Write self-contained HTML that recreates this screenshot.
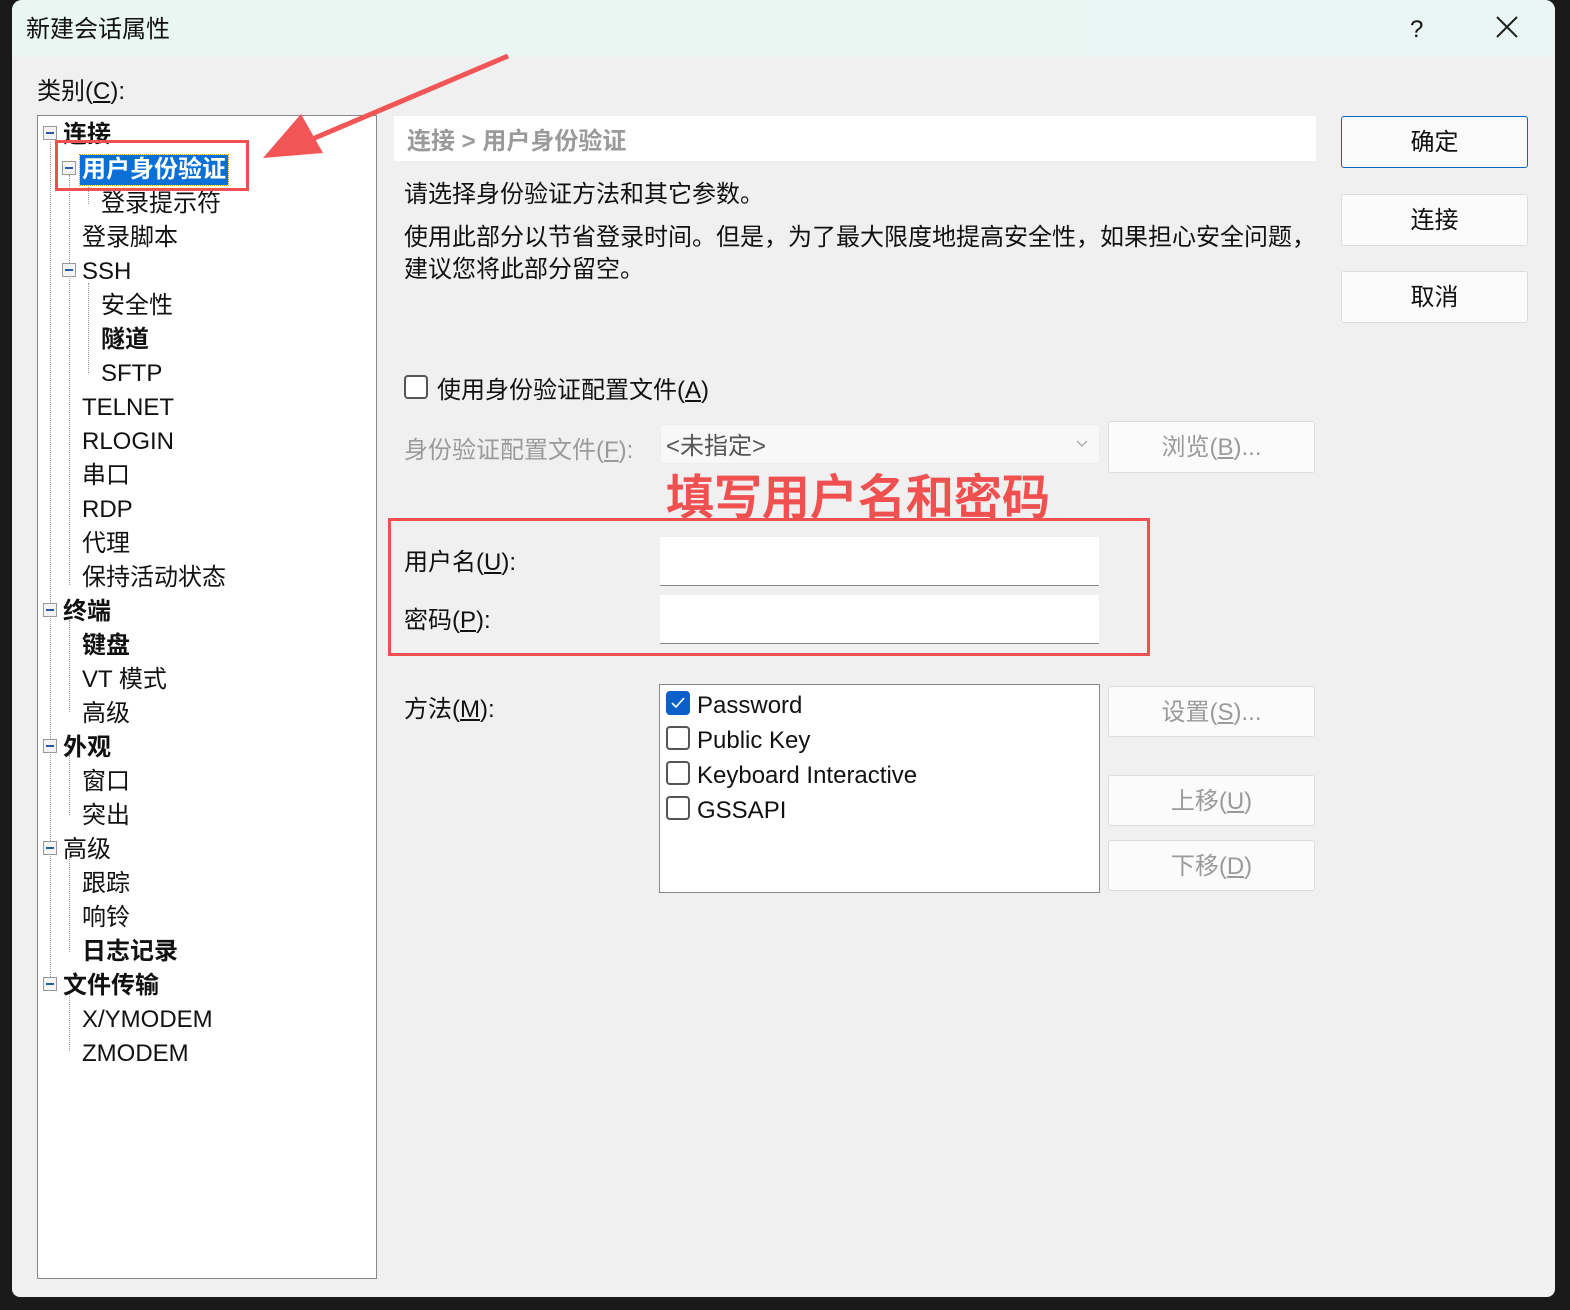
<!DOCTYPE html><html><head><meta charset="utf-8"><style>
body{margin:0;width:1570px;height:1310px;background:#1a1a1a;position:relative;overflow:hidden;font-family:"Liberation Sans","Noto Sans CJK SC",sans-serif;color:#111}
.a{position:absolute}
.dlg{left:12px;top:0;width:1543px;height:1297px;background:#f0f0f0;border-radius:10px 10px 8px 8px;overflow:hidden}
.title{left:0;top:0;width:1543px;height:57px;background:linear-gradient(90deg,#e9f6f2,#eaf6f3)}
.t{font-size:24px;white-space:nowrap;line-height:30px;margin-top:2px}
.tree{left:37px;top:115px;width:338px;height:1162px;background:#fff;border:1px solid #888}
.pm{width:14px;height:14px;border:1px solid #999;background:#f4f4f4;box-sizing:border-box}
.pm:after{content:"";position:absolute;left:2px;top:5px;width:8px;height:2px;background:#2a5aa8}
.btn{background:#fbfbfb;border:1px solid #ddd;border-radius:3px;font-size:24px;text-align:center;box-sizing:border-box}
.gray{color:#9a9a9a}
.inp{background:#fff;border-bottom:1px solid #888;box-sizing:border-box}
.cb{width:24px;height:24px;border:2px solid #555;border-radius:4px;box-sizing:border-box;background:#fff}
.dot{border-left:1px dotted #999}
</style></head><body>
<div class="a dlg">
<div class="a title"></div>
<div class="a t" style="left:14px;top:13px">新建会话属性</div>
<div class="a t" style="left:1398px;top:13px">?</div>
<svg class="a" style="left:1484px;top:16px" width="22" height="22"><path d="M1 1L21 21M21 1L1 21" stroke="#222" stroke-width="2"/></svg>
<div class="a t" style="left:25px;top:75px">类别(<u>C</u>):</div>
</div>
<div class="a tree"></div>
<div class="a dot" style="left:50px;top:142px;height:845px"></div>
<div class="a dot" style="left:69px;top:175px;height:410px"></div>
<div class="a dot" style="left:88px;top:182px;height:22px"></div>
<div class="a dot" style="left:88px;top:283px;height:90px"></div>
<div class="a dot" style="left:69px;top:620px;height:92px"></div>
<div class="a dot" style="left:69px;top:755px;height:60px"></div>
<div class="a dot" style="left:69px;top:857px;height:95px"></div>
<div class="a dot" style="left:69px;top:993px;height:58px"></div>
<div class="a pm" style="left:43px;top:126px"></div>
<div class="a pm" style="left:62px;top:161px"></div>
<div class="a pm" style="left:62px;top:263px"></div>
<div class="a pm" style="left:43px;top:603px"></div>
<div class="a pm" style="left:43px;top:739px"></div>
<div class="a pm" style="left:43px;top:841px"></div>
<div class="a pm" style="left:43px;top:977px"></div>
<div class="a t" style="left:63px;top:118px;font-weight:bold">连接</div>
<div class="a t" style="left:80px;top:153px;font-weight:bold;color:#fff;background:#0a6fd6;outline:1px dotted #e90;padding:0 2px">用户身份验证</div>
<div class="a t" style="left:101px;top:187px">登录提示符</div>
<div class="a t" style="left:82px;top:221px">登录脚本</div>
<div class="a t" style="left:82px;top:255px">SSH</div>
<div class="a t" style="left:101px;top:289px">安全性</div>
<div class="a t" style="left:101px;top:323px;font-weight:bold">隧道</div>
<div class="a t" style="left:101px;top:357px">SFTP</div>
<div class="a t" style="left:82px;top:391px">TELNET</div>
<div class="a t" style="left:82px;top:425px">RLOGIN</div>
<div class="a t" style="left:82px;top:459px">串口</div>
<div class="a t" style="left:82px;top:493px">RDP</div>
<div class="a t" style="left:82px;top:527px">代理</div>
<div class="a t" style="left:82px;top:561px">保持活动状态</div>
<div class="a t" style="left:63px;top:595px;font-weight:bold">终端</div>
<div class="a t" style="left:82px;top:629px;font-weight:bold">键盘</div>
<div class="a t" style="left:82px;top:663px">VT 模式</div>
<div class="a t" style="left:82px;top:697px">高级</div>
<div class="a t" style="left:63px;top:731px;font-weight:bold">外观</div>
<div class="a t" style="left:82px;top:765px">窗口</div>
<div class="a t" style="left:82px;top:799px">突出</div>
<div class="a t" style="left:63px;top:833px">高级</div>
<div class="a t" style="left:82px;top:867px">跟踪</div>
<div class="a t" style="left:82px;top:901px">响铃</div>
<div class="a t" style="left:82px;top:935px;font-weight:bold">日志记录</div>
<div class="a t" style="left:63px;top:969px;font-weight:bold">文件传输</div>
<div class="a t" style="left:82px;top:1003px">X/YMODEM</div>
<div class="a t" style="left:82px;top:1037px">ZMODEM</div>
<div class="a" style="left:55px;top:140px;width:194px;height:51px;border:3px solid #f05050;box-sizing:border-box"></div>
<svg class="a" style="left:255px;top:50px" width="260" height="115"><path d="M253 6L55 90" stroke="#f25555" stroke-width="5"/><path d="M8 108L46 64L68 103Z" fill="#f25555"/></svg>
<div class="a" style="left:394px;top:116px;width:922px;height:45px;background:#fff"></div>
<div class="a t gray" style="left:407px;top:125px;font-weight:bold">连接 &gt; 用户身份验证</div>
<div class="a t" style="left:404px;top:178px">请选择身份验证方法和其它参数。</div>
<div class="a t" style="left:404px;top:221px">使用此部分以节省登录时间。但是，为了最大限度地提高安全性，如果担心安全问题，</div>
<div class="a t" style="left:404px;top:253px">建议您将此部分留空。</div>
<div class="a btn" style="left:1341px;top:116px;width:187px;height:52px;line-height:52px;border:1px solid #0a64c8">确定</div>
<div class="a btn" style="left:1341px;top:194px;width:187px;height:52px;line-height:52px">连接</div>
<div class="a btn" style="left:1341px;top:271px;width:187px;height:52px;line-height:52px">取消</div>
<div class="a cb" style="left:404px;top:375px"></div>
<div class="a t" style="left:437px;top:374px">使用身份验证配置文件(<u>A</u>)</div>
<div class="a t gray" style="left:404px;top:434px">身份验证配置文件(<u>F</u>):</div>
<div class="a" style="left:660px;top:424px;width:438px;height:38px;background:#f8f8f8;border:1px solid #eee"></div>
<div class="a t" style="left:666px;top:430px;color:#555">&lt;未指定&gt;</div>
<svg class="a" style="left:1076px;top:440px" width="12" height="8"><path d="M1 1L6 6L11 1" stroke="#999" fill="none"/></svg>
<div class="a btn gray" style="left:1108px;top:421px;width:207px;height:52px;line-height:52px">浏览(<u>B</u>)...</div>
<div class="a" style="left:666px;top:458px;font-size:48px;color:#f05050;white-space:nowrap;font-weight:500;-webkit-text-stroke:0.8px #f05050">填写用户名和密码</div>
<div class="a" style="left:388px;top:518px;width:762px;height:138px;border:3px solid #f05050;box-sizing:border-box"></div>
<div class="a t" style="left:404px;top:546px">用户名(<u>U</u>):</div>
<div class="a inp" style="left:660px;top:537px;width:439px;height:49px"></div>
<div class="a t" style="left:404px;top:604px">密码(<u>P</u>):</div>
<div class="a inp" style="left:660px;top:595px;width:439px;height:49px"></div>
<div class="a t" style="left:404px;top:693px">方法(<u>M</u>):</div>
<div class="a" style="left:659px;top:684px;width:441px;height:209px;background:#fff;border:1px solid #888;box-sizing:border-box"></div>
<div class="a cb" style="left:666px;top:691px;background:#0a60c8;border-color:#0a60c8"></div>
<svg class="a" style="left:670px;top:696px" width="16" height="14"><path d="M2 7L6 11L14 2" stroke="#fff" stroke-width="1.6" fill="none"/></svg>
<div class="a t" style="left:697px;top:689px">Password</div>
<div class="a cb" style="left:666px;top:726px"></div>
<div class="a t" style="left:697px;top:724px">Public Key</div>
<div class="a cb" style="left:666px;top:761px"></div>
<div class="a t" style="left:697px;top:759px">Keyboard Interactive</div>
<div class="a cb" style="left:666px;top:796px"></div>
<div class="a t" style="left:697px;top:794px">GSSAPI</div>
<div class="a btn gray" style="left:1108px;top:686px;width:207px;height:51px;line-height:51px">设置(<u>S</u>)...</div>
<div class="a btn gray" style="left:1108px;top:775px;width:207px;height:51px;line-height:51px">上移(<u>U</u>)</div>
<div class="a btn gray" style="left:1108px;top:840px;width:207px;height:51px;line-height:51px">下移(<u>D</u>)</div>
</body></html>
